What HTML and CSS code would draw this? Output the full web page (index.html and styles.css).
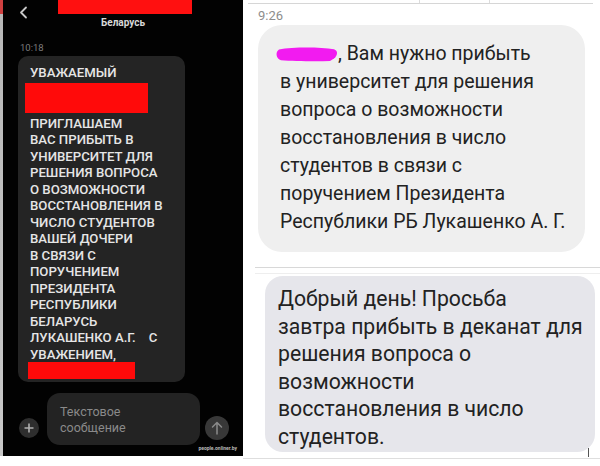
FILE: index.html
```html
<!DOCTYPE html>
<html lang="ru">
<head>
<meta charset="utf-8">
<title>Сообщения</title>
<link rel="stylesheet" href="styles.css">
</head>
<body>
<div class="page">
  <div class="edge"></div>
  <section class="dark">
    <header class="dk-head">
      <span class="back">
        <svg width="9" height="13" viewBox="0 0 9 13"><polyline points="7,1.5 2,6.5 7,11.5" fill="none" stroke="#c8c8c8" stroke-width="1.8" stroke-linecap="round" stroke-linejoin="round"/></svg>
      </span>
      <div class="dk-center">
        <div class="redact-top"></div>
        <div class="dk-title">Беларусь</div>
      </div>
    </header>
    <div class="dk-time">10:18</div>
    <div class="dk-bubble">
      <div class="ln">УВАЖАЕМЫЙ</div>
      <div class="redact r1"></div>
      <div class="ln">ПРИГЛАШАЕМ</div>
      <div class="ln">ВАС ПРИБЫТЬ В</div>
      <div class="ln">УНИВЕРСИТЕТ ДЛЯ</div>
      <div class="ln">РЕШЕНИЯ ВОПРОСА</div>
      <div class="ln">О ВОЗМОЖНОСТИ</div>
      <div class="ln">ВОССТАНОВЛЕНИЯ В</div>
      <div class="ln">ЧИСЛО СТУДЕНТОВ</div>
      <div class="ln">ВАШЕЙ ДОЧЕРИ</div>
      <div class="ln">В СВЯЗИ С</div>
      <div class="ln">ПОРУЧЕНИЕМ</div>
      <div class="ln">ПРЕЗИДЕНТА</div>
      <div class="ln">РЕСПУБЛИКИ</div>
      <div class="ln">БЕЛАРУСЬ</div>
      <div class="ln">ЛУКАШЕНКО А.Г.    С</div>
      <div class="ln">УВАЖЕНИЕМ,</div>
      <div class="redact r2"></div>
    </div>
    <div class="composer">
      <span class="plus">
        <svg width="10" height="10" viewBox="0 0 10 10"><path d="M5 0.5V9.5M0.5 5H9.5" stroke="#b0b0b0" stroke-width="1.6"/></svg>
      </span>
      <div class="input">Текстовое<br>сообщение</div>
      <span class="send">
        <svg width="12" height="14" viewBox="0 0 12 14"><path d="M6 13V1.5M1.5 6L6 1.5L10.5 6" fill="none" stroke="#8a8a8a" stroke-width="1.5" stroke-linecap="round" stroke-linejoin="round"/></svg>
      </span>
    </div>
    <div class="wm">people.onliner.by</div>
  </section>

  <section class="light">
    <div class="topbar"><span class="seg a"></span><span class="seg b"></span><span class="seg c"></span></div>
    <div class="lt-time">9:26</div>
    <div class="bubble1">
      <div><svg class="pink" width="63" height="16" viewBox="0 0 63 16"><path d="M4 3.5C18 1 44 1 59 3.2C63 4.5 63 9 59 12.5L55 15C38 15.5 18 15 6 14.2C1 13 0 6 4 3.5Z" fill="#f21bf0"/></svg>, Вам нужно прибыть</div>
      <div>в университет для решения</div>
      <div>вопроса о возможности</div>
      <div>восстановления в число</div>
      <div>студентов в связи с</div>
      <div>поручением Президента</div>
      <div>Республики РБ Лукашенко А. Г.</div>
    </div>
    <div class="rules"><div class="rule1"></div><div class="rule2"></div></div>
    <div class="bubble2">
      <div>Добрый день! Просьба</div>
      <div>завтра прибыть в деканат для</div>
      <div>решения вопроса о</div>
      <div>возможности</div>
      <div>восстановления в число</div>
      <div>студентов.</div>
    </div>
    <div class="bottom"><span class="tick"></span></div>
  </section>
</div>
</body>
</html>
```

FILE: styles.css
```css
* { box-sizing: border-box; }
html, body { margin: 0; padding: 0; background: #ffffff; }
body { width: 600px; height: 466px; overflow: hidden; font-family: Roboto, "Liberation Sans", Arial, sans-serif; }

.page { display: flex; align-items: flex-start; width: 600px; height: 466px; }

.edge { width: 3px; height: 456px; background: linear-gradient(#d04040 0, #d04040 14px, #b8b8b8 14px, #c8c8c8 100%); }

/* dark phone screenshot */
.dark { width: 240px; height: 456px; background: #020202; display: flex; flex-direction: column; overflow: hidden; }
.dk-head { display: grid; grid-template-columns: 55px 134px 1fr; height: 32px; }
.back { padding: 6px 0 0 16px; display: block; }
.back svg { display: block; }
.dk-center { display: flex; flex-direction: column; align-items: center; }
.redact-top { width: 134px; height: 14px; background: #ff1010; }
.dk-title { margin-top: 3px; font-size: 10px; font-weight: 700; color: #d8d8d8; line-height: 12px; margin-right: 4px; }
.dk-time { margin: 10px 0 0 17px; font-size: 9.5px; line-height: 12px; color: #7c7c7c; }
.dk-bubble { margin: 2px 0 0 15px; width: 167px; height: 326px; background: #242424; border-radius: 10px; padding: 9px 0 0 12px; }
.ln { font-size: 13.2px; font-weight: 500; line-height: 16.5px; color: #e6e6e6; white-space: pre; }
.redact { background: #ff0a0a; }
.r1 { width: 123px; height: 30px; margin: 1.5px 0 2.5px -5px; }
.r2 { width: 107px; height: 17px; margin: -1px 0 0 -2px; }

.composer { display: flex; align-items: flex-end; margin-top: 11px; padding-left: 16px; }
.plus { width: 20px; height: 20px; border-radius: 50%; background: #2e2e2e; display: flex; align-items: center; justify-content: center; margin-bottom: 7px; }
.input { width: 153px; height: 52px; margin-left: 8px; background: #232323; border-radius: 13px; padding: 11px 0 0 13px; font-size: 12.5px; line-height: 16px; color: #8a8a8a; }
.send { width: 24px; height: 24px; margin: 0 0 5px 5px; border-radius: 50%; background: #383838; display: flex; align-items: center; justify-content: center; }
.plus svg, .send svg { display: block; }
.wm { text-align: right; padding-right: 6px; font-size: 5px; line-height: 6px; color: #b8b8b8; font-weight: 700; margin-top: 0; }

/* light screenshots */
.light { width: 357px; display: flex; flex-direction: column; }
.topbar { display: flex; margin-left: 5px; width: 345px; height: 4px; border-bottom: 1px solid #d6d6d6; }
.seg { height: 3px; }
.seg.a { width: 172px; border-right: 1px solid #dcdcdc; }
.seg.b { width: 70px; border-right: 1px solid #dcdcdc; }
.seg.c { flex: 1; }
.lt-time { margin: 5px 0 0 15px; font-size: 13px; line-height: 14px; color: #8d8d8d; }
.bubble1 { margin: 2px 0 0 15px; width: 327px; height: 227px; background: #efefef; border-radius: 24px; padding: 15px 0 0 22px; font-size: 19.5px; line-height: 28px; color: #222222; }
.pink { display: inline-block; vertical-align: -2px; margin-left: -5px; }
.rules { margin: 15px 0 0 12px; }
.rule1 { height: 1px; background: #d8d8d8; }
.rule2 { height: 1px; margin-top: 5px; background: #eeeeee; }
.bubble2 { margin: 2px 0 0 22px; width: 330px; height: 176px; background: #e6e6eb; border-radius: 18px; padding: 9px 0 0 13px; font-size: 21.2px; line-height: 27.6px; color: #222222; }
.bottom { margin: 6px 0 0 0; height: 1px; background: #dedede; position: relative; }
.tick { position: absolute; left: 345px; top: -10px; width: 1px; height: 9px; background: #555555; }
```
